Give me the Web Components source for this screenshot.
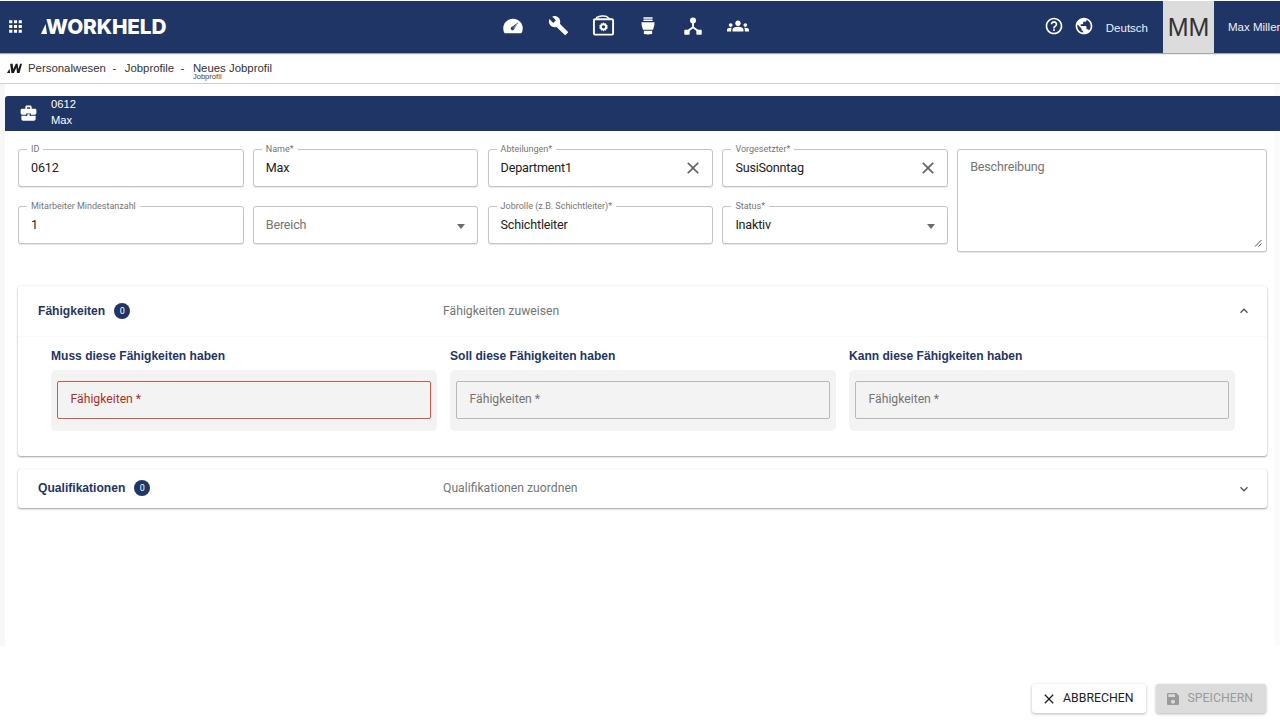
<!DOCTYPE html>
<html lang="de"><head><meta charset="utf-8"><title>Neues Jobprofil</title>
<style>
html,body{margin:0;padding:0;height:720px;overflow:hidden;background:#fff;font-family:Roboto,"Liberation Sans",sans-serif}
wh-app{height:720px}
</style></head><body>
<wh-app></wh-app>
<script>
const P={
apps:'M4 8h4V4H4v4zm6 12h4v-4h-4v4zm-6 0h4v-4H4v4zm0-6h4v-4H4v4zm6 0h4v-4h-4v4zm6-10v4h4V4h-4zm-6 4h4V4h-4v4zm6 6h4v-4h-4v4zm0 6h4v-4h-4v4z',
wrench:'M22.7 19l-9.1-9.1c.9-2.3.4-5-1.5-6.9-2-2-5-2.4-7.4-1.3L9 6 6 9 1.6 4.7C.4 7.1.9 10.1 2.9 12.1c1.9 1.9 4.6 2.4 6.9 1.5l9.1 9.1c.4.4 1 .4 1.4 0l2.3-2.3c.5-.4.5-1.1.1-1.4z',
groups:'M12 12.75c1.63 0 3.07.39 4.24.9 1.08.48 1.76 1.56 1.76 2.73V18H6v-1.61c0-1.18.68-2.26 1.76-2.73 1.17-.52 2.61-.91 4.24-.91zM4 13c1.1 0 2-.9 2-2s-.9-2-2-2-2 .9-2 2 .9 2 2 2zm1.13 1.1c-.37-.06-.74-.1-1.13-.1-.99 0-1.93.21-2.78.58C.48 14.9 0 15.62 0 16.43V18h4.5v-1.61c0-.83.23-1.61.63-2.29zM20 13c1.1 0 2-.9 2-2s-.9-2-2-2-2 .9-2 2 .9 2 2 2zm4 3.43c0-.81-.48-1.53-1.22-1.85-.85-.37-1.79-.58-2.78-.58-.39 0-.76.04-1.13.1.4.68.63 1.46.63 2.29V18H24v-1.57zM12 6c1.66 0 3 1.34 3 3s-1.34 3-3 3-3-1.34-3-3 1.34-3 3-3z',
help:'M11 18h2v-2h-2v2zm1-16C6.48 2 2 6.48 2 12s4.48 10 10 10 10-4.48 10-10S17.52 2 12 2zm0 18c-4.41 0-8-3.59-8-8s3.59-8 8-8 8 3.59 8 8-3.59 8-8 8zm0-14c-2.21 0-4 1.79-4 4h2c0-1.1.9-2 2-2s2 .9 2 2c0 2-3 1.75-3 5h2c0-2.25 3-2.5 3-5 0-2.21-1.79-4-4-4z',
globe:'M12 2C6.48 2 2 6.48 2 12s4.48 10 10 10 10-4.48 10-10S17.52 2 12 2zm-1 17.93c-3.95-.49-7-3.85-7-7.93 0-.62.08-1.21.21-1.79L9 15v1c0 1.1.9 2 2 2v1.93zm6.9-2.54c-.26-.81-1-1.39-1.9-1.39h-1v-3c0-.55-.45-1-1-1H8v-2h2c.55 0 1-.45 1-1V7h2c1.1 0 2-.9 2-2v-.41c2.93 1.19 5 4.06 5 7.41 0 2.08-.8 3.97-2.1 5.39z',
close:'M19 6.41L17.59 5 12 10.59 6.41 5 5 6.41 10.59 12 5 17.59 6.41 19 12 13.41 17.59 19 19 17.59 13.41 12z',
save:'M17 3H5c-1.11 0-2 .9-2 2v14c0 1.1.89 2 2 2h14c1.1 0 2-.9 2-2V7l-4-4zm-5 16c-1.66 0-3-1.34-3-3s1.34-3 3-3 3 1.34 3 3-1.34 3-3 3zm3-10H5V5h10v4z',
less:'M12 8l-6 6 1.41 1.41L12 10.83l4.59 4.58L18 14z',
more:'M16.59 8.59L12 13.17 7.41 8.59 6 10l6 6 6-6z'};
const svg=(d,s,c='currentColor')=>`<svg width="${s}" height="${s}" viewBox="0 0 24 24" fill="${c}" style="display:block;flex:none"><path d="${d}"/></svg>`;
const NAVY='#1f3566';
const mark=(h,c)=>`<svg height="${h}" viewBox="0 0 24 16" style="display:block;flex:none" fill="${c}"><path d="M0 16 L4 9 L5 16Z"/><path d="M5 1H9L10 10 14 1H17L18 10 21 1H24L20 16H16L15 7 11 16H7Z"/></svg>`;

class WhNavIcon extends HTMLElement{
  constructor(){super();const k=this.getAttribute('kind');
  const icons={
   gauge:`<svg width="22" height="22" viewBox="0 0 24 24"><path fill="#fff" d="M2.6 19.5A10.6 10.6 0 1 1 21.4 19.5Q21 20 20 20H4Q3 20 2.6 19.5Z"/><path d="M18 8 L13.2 15.6A1.9 1.9 0 1 1 10.6 13Z" fill="${NAVY}"/><path d="M17 9.5 12.2 14.6" stroke="#fff" stroke-width=".8"/></svg>`,
   wrench:svg(P.wrench,21,'#fff'),
   camera:`<svg width="23" height="23" viewBox="0 0 24 24" fill="none"><path d="M5 5.5V3.5C8 2 13 1.6 15 2.5L19 5.5" stroke="#fff" stroke-width="1.6"/><rect x="2" y="5.5" width="20" height="16" rx="1.2" stroke="#fff" stroke-width="2"/><path fill="#fff" d="M12 8.6l1 1.2 1.6-.2.5 1.5 1.4.8-.6 1.5.6 1.5-1.4.8-.5 1.5-1.6-.2-1 1.2-1-1.2-1.6.2-.5-1.5-1.4-.8.6-1.5-.6-1.5 1.4-.8.5-1.5 1.6.2z"/><circle cx="12" cy="13.4" r="1.7" fill="${NAVY}"/></svg>`,
   cup:`<svg width="22" height="22" viewBox="0 0 24 24" fill="#fff"><path d="M7 2.5H17V4H7zM7 5H17V6.5H7z"/><path d="M5 8H19V10.5L17.5 16H6.5L5 10.5Z"/><path d="M7.5 17.2H16.5V20.8Q12 21.8 7.5 20.8Z"/></svg>`,
   net:`<svg width="20" height="20" viewBox="0 0 24 24" fill="#fff"><circle cx="12" cy="5.5" r="3.6"/><rect x="1.5" y="16.5" width="6.5" height="6" rx="1.2"/><rect x="16" y="16.5" width="6.5" height="6" rx="1.2"/><path d="M12 8V13.5L5 18.5M12 13.5L19 18.5" stroke="#fff" stroke-width="2.2" fill="none"/></svg>`,
   groups:svg(P.groups,22,'#fff')};
  this.attachShadow({mode:'open'}).innerHTML=`<style>:host{display:flex;align-items:center;justify-content:center;width:45px;height:26px}</style>${icons[k]}`;}
}
customElements.define('wh-nav-icon',WhNavIcon);

class WhHeader extends HTMLElement{
  constructor(){super();this.attachShadow({mode:'open'}).innerHTML=`<style>
  :host{display:grid;grid-template-columns:1fr auto 1fr;align-items:center;height:52px;margin-top:1px;background:${NAVY};color:#fff;box-shadow:0 1px 1px rgba(0,0,0,.35);font-family:"Liberation Sans",Arial,sans-serif;position:relative;z-index:2}
  .l{display:flex;align-items:center;padding-left:6px;gap:16px}
  .logo{display:flex;align-items:center;font:800 20.8px/1 Inter,Roboto,sans-serif;letter-spacing:-.15px}
  .logo svg{margin:5px -1px 0 0}
  nav{display:flex;align-items:center;margin-right:29px;margin-top:-3px}
  .r{display:flex;align-items:stretch;justify-content:flex-end;height:52px}
  .i{display:flex;align-items:center;gap:10px;margin-top:-2px;margin-right:12px}
  .lang{align-self:center;font-size:11.5px;margin-right:15px;margin-top:1px;color:#eef1f6}
  .av{width:51px;background:#dcdcdc;color:#333;font:25px/52px "Liberation Sans",Arial,sans-serif;text-align:center;letter-spacing:-.1px}
  .u{align-self:center;font-size:11.5px;padding-left:14px;white-space:nowrap;width:52px;overflow:hidden;margin-top:-1px;color:#eef1f6}
  </style>
  <div class="l">${svg(P.apps,19)}<div class="logo"><svg width="6" height="10" viewBox="0 0 6 10" fill="#fff"><path d="M0 10 L4.6 0 L6 10Z"/></svg><span>WORKHELD</span></div></div>
  <nav><wh-nav-icon kind="gauge"></wh-nav-icon><wh-nav-icon kind="wrench"></wh-nav-icon><wh-nav-icon kind="camera"></wh-nav-icon><wh-nav-icon kind="cup"></wh-nav-icon><wh-nav-icon kind="net"></wh-nav-icon><wh-nav-icon kind="groups"></wh-nav-icon></nav>
  <div class="r"><div class="i">${svg(P.help,20)}${svg(P.globe,20)}</div><div class="lang">Deutsch</div><div class="av">MM</div><div class="u">Max Miller</div></div>`;}
}
customElements.define('wh-header',WhHeader);

class WhBreadcrumb extends HTMLElement{
  constructor(){super();this.attachShadow({mode:'open'}).innerHTML=`<style>
  :host{display:flex;align-items:flex-start;height:31px;box-sizing:border-box;padding:9px 0 0 7px;border-bottom:1px solid #cfcfcf;box-shadow:0 1px 1px rgba(0,0,0,.06);font:11.4px/13px "Liberation Sans",Arial,sans-serif;color:#333;white-space:nowrap}
  .m{margin:1px 6px 0 0}
  .s{margin:0 8.5px 0 6.5px}
  .st{display:flex;flex-direction:column}
  small{font-size:7.6px;line-height:6px;margin-top:-1.5px;color:#444}
  </style><div class="m">${mark(10,'#1a1a1a')}</div><span>Personalwesen</span><span class="s">-</span><span>Jobprofile</span><span class="s">-</span><div class="st"><span>Neues Jobprofil</span><small>Jobprofil</small></div>`;}
}
customElements.define('wh-breadcrumb',WhBreadcrumb);

class WhTitleBar extends HTMLElement{
  constructor(){super();this.attachShadow({mode:'open'}).innerHTML=`<style>
  :host{display:flex;align-items:center;height:35px;background:${NAVY};color:#fff;border-radius:3px 0 0 0;font:11.2px/16px "Liberation Sans",Arial,sans-serif;padding-left:14px;gap:13px}
  div{margin-top:-3px}
  </style><svg width="19" height="19" viewBox="0 0 24 24" fill="#fff" style="display:block"><path d="M20 6h-4V4c0-1.11-.89-2-2-2h-4c-1.11 0-2 .89-2 2v2H4c-1.11 0-2 .89-2 2v3.5c0 1.1.9 2 2 2h5V12h6v1.5h5c1.1 0 2-.9 2-2V8c0-1.11-.89-2-2-2zm-6 0h-4V4h4v2zM15 15H9v-.2H3v4.2c0 1.11.89 2 2 2h14c1.11 0 2-.89 2-2v-4.2h-6zM10.5 13h3v2h-3z"/></svg><div><slot></slot></div>`;}
}
customElements.define('wh-title-bar',WhTitleBar);

class WhField extends HTMLElement{
  constructor(){super();const g=n=>this.getAttribute(n);
  const label=g('label'),val=g('value'),ph=g('placeholder'),k=g('kind');
  const end=k==='clear'?`<span class="e c">${svg(P.close,20)}</span>`:k==='select'?`<span class="e a"></span>`:'';
  this.attachShadow({mode:'open'}).innerHTML=`<style>
  :host{display:block;position:relative;height:38px;box-sizing:border-box;border:1px solid #c4c4c4;border-radius:3px;background:#fff;box-shadow:0 1px 1px rgba(0,0,0,.1);font-family:Roboto,"Liberation Sans",sans-serif}
  .b{display:flex;align-items:center;height:100%;padding:0 12px;font-size:12.6px;letter-spacing:-.2px;color:#222}
  .b.ta{align-items:flex-start;padding-top:9px}
  .v{flex:1;line-height:18px;margin-top:-1px}
  .p{color:#757575}
  .lb{position:absolute;left:8px;top:-6px;background:#fff;padding:0 4px;font-size:9px;line-height:10px;color:#757575;white-space:nowrap}
  .e{display:flex;color:#5f5f5f}
  .c{margin-right:-3px}
  .a{width:0;height:0;border:4.5px solid transparent;border-top:5px solid #6b6b6b;border-bottom:0;margin-right:0;margin-top:2px}
  .grip{position:absolute;right:4px;bottom:4px}
  </style>${label?`<div class="lb">${label}</div>`:''}<div class="b ${k==='area'?'ta':''}">${val?`<span class="v">${val}</span>`:`<span class="v p">${ph||''}</span>`}${end}</div>
  ${k==='area'?`<svg class="grip" width="8" height="8" viewBox="0 0 8 8" stroke="#555" fill="none"><path d="M1 7.5 7.5 1M4.5 7.5 7.5 4.5"/></svg>`:''}`;}
}
customElements.define('wh-field',WhField);

class WhPanel extends HTMLElement{
  constructor(){super();const g=n=>this.getAttribute(n);const open=this.hasAttribute('open');
  this.attachShadow({mode:'open'}).innerHTML=`<style>
  :host{display:block;background:#fff;border-radius:3px;box-shadow:0 1px 2px rgba(0,0,0,.38),0 0 2px rgba(0,0,0,.06);font-family:Roboto,"Liberation Sans",sans-serif}
  .h{position:relative;display:flex;align-items:center;height:${open?51:39}px;padding:0 15px ${open?0:2}px 20px;box-sizing:border-box;${open?'border-bottom:1px solid #fafafa':''}}
  .t{font:700 12.1px/16px "Liberation Sans",Arial,sans-serif;color:${NAVY};white-space:nowrap}
  .n{width:16px;height:16px;border-radius:50%;background:${NAVY};color:#fff;font-size:9px;line-height:16px;text-align:center;margin-left:9px}
  .d{position:absolute;left:425px;font-size:12.2px;color:#757575;white-space:nowrap}
  .chev{margin-left:auto;color:#555;${open?'':'margin-top:3px'}}
  </style><div class="h"><span class="t">${g('title')}</span><span class="n">0</span><span class="d">${g('desc')}</span><span class="chev">${svg(open?P.less:P.more,16)}</span></div><slot></slot>`;}
}
customElements.define('wh-panel',WhPanel);

class WhSkillColumn extends HTMLElement{
  constructor(){super();const err=this.hasAttribute('error');
  this.attachShadow({mode:'open'}).innerHTML=`<style>
  :host{display:block;font-family:Roboto,"Liberation Sans",sans-serif}
  h4{margin:0 0 6px;font:700 12.05px/16px "Liberation Sans",Arial,sans-serif;color:${NAVY};white-space:nowrap}
  .box{background:#f3f3f3;border-radius:5px;padding:11px 6px 12px 6px}
  .f{height:38px;box-sizing:border-box;border:1px solid ${err?'#cf5a48':'#b8b8b8'};border-radius:2px;display:flex;align-items:center;padding:0 12.5px 2px;font-size:12.2px;color:${err?'#b3301e':'#757575'};background:#f3f3f3}
  </style><h4>${this.getAttribute('title')}</h4><div class="box"><div class="f">Fähigkeiten *</div></div>`;}
}
customElements.define('wh-skill-column',WhSkillColumn);

class WhButton extends HTMLElement{
  constructor(){super();const dis=this.hasAttribute('disabled');
  this.attachShadow({mode:'open'}).innerHTML=`<style>
  :host{display:flex;align-items:center;height:29px;box-sizing:border-box;padding:0 13px 0 9px;gap:6px;border-radius:3px;font:12.3px/1 Roboto,"Liberation Sans",sans-serif;background:${dis?'#dcdcdc':'#fff'};color:${dis?'#9a9a9a':'#222'};box-shadow:0 1px 3px rgba(0,0,0,.3)}
  </style>${svg(dis?P.save:P.close,16)}<slot></slot>`;}
}
customElements.define('wh-button',WhButton);

class WhApp extends HTMLElement{
  constructor(){super();this.attachShadow({mode:'open'}).innerHTML=`<style>
  :host{display:flex;flex-direction:column;height:720px}
  .wrap{height:562px;background:#f7f7f7;padding:0 0 0 5px;flex:none;box-sizing:border-box}
  .page{height:100%;background:linear-gradient(to left,#fbfbfb 6px,#fff 6px);padding-top:12px;box-sizing:border-box}
  .form{display:grid;grid-template-columns:repeat(4,225.5px) 310px;grid-template-rows:38px 38px;column-gap:9.3px;row-gap:19px;padding:18px 0 0 13px;align-items:start}
  .area{grid-column:5;grid-row:1/3;height:103px}
  .panels{display:flex;flex-direction:column;gap:13px;margin:42px 13px 0 13px}
  .cols{display:grid;grid-template-columns:repeat(3,386px);column-gap:13px;padding:11px 0 25px 33px}
  footer{flex:1;display:flex;justify-content:flex-end;align-items:flex-start;gap:10px;padding:38px 14px 0 0}
  </style>
  <wh-header></wh-header>
  <wh-breadcrumb></wh-breadcrumb>
  <div class="wrap"><div class="page">
    <wh-title-bar>0612<br>Max</wh-title-bar>
    <div class="form">
      <wh-field label="ID" value="0612"></wh-field>
      <wh-field label="Name*" value="Max"></wh-field>
      <wh-field label="Abteilungen*" value="Department1" kind="clear"></wh-field>
      <wh-field label="Vorgesetzter*" value="SusiSonntag" kind="clear"></wh-field>
      <wh-field class="area" placeholder="Beschreibung" kind="area"></wh-field>
      <wh-field label="Mitarbeiter Mindestanzahl" value="1"></wh-field>
      <wh-field placeholder="Bereich" kind="select"></wh-field>
      <wh-field label="Jobrolle (z.B. Schichtleiter)*" value="Schichtleiter"></wh-field>
      <wh-field label="Status*" value="Inaktiv" kind="select"></wh-field>
    </div>
    <div class="panels">
      <wh-panel open title="Fähigkeiten" desc="Fähigkeiten zuweisen">
        <div class="cols">
          <wh-skill-column error title="Muss diese Fähigkeiten haben"></wh-skill-column>
          <wh-skill-column title="Soll diese Fähigkeiten haben"></wh-skill-column>
          <wh-skill-column title="Kann diese Fähigkeiten haben"></wh-skill-column>
        </div>
      </wh-panel>
      <wh-panel title="Qualifikationen" desc="Qualifikationen zuordnen"></wh-panel>
    </div>
  </div></div>
  <footer><wh-button>ABBRECHEN</wh-button><wh-button disabled>SPEICHERN</wh-button></footer>`;}
}
customElements.define('wh-app',WhApp);
</script></body></html>
